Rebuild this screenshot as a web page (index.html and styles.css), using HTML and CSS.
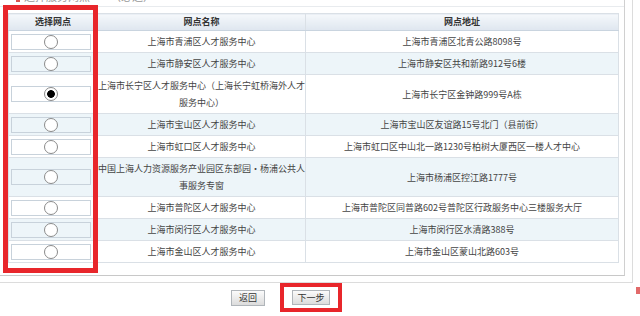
FILE: index.html
```html
<!DOCTYPE html>
<html lang="zh-CN">
<head>
  <meta charset="UTF-8">
  <meta name="viewport" content="width=device-width, initial-scale=1.0">
  <title>选择服务网点</title>
  <link rel="stylesheet" href="styles.css">
</head>
<body>
  <div class="page">
    <div class="frame">
      <div class="panel">
        <div class="panel-title">
          <span class="mark"></span>
          <span class="title-text">选择服务网点</span>
          <span class="title-note">（必选）</span>
        </div>
        <table class="sites">
          <colgroup>
            <col class="col-pick">
            <col class="col-name">
            <col class="col-addr">
          </colgroup>
          <thead>
            <tr>
              <th>选择网点</th>
              <th>网点名称</th>
              <th>网点地址</th>
            </tr>
          </thead>
          <tbody>
            <tr>
              <td><label class="pick"><input type="radio" name="site"></label></td>
              <td>上海市青浦区人才服务中心</td>
              <td>上海市青浦区北青公路8098号</td>
            </tr>
            <tr>
              <td><label class="pick"><input type="radio" name="site"></label></td>
              <td>上海市静安区人才服务中心</td>
              <td>上海市静安区共和新路912号6楼</td>
            </tr>
            <tr>
              <td><label class="pick"><input type="radio" name="site" checked></label></td>
              <td>上海市长宁区人才服务中心（上海长宁虹桥海外人才<br>服务中心）</td>
              <td>上海市长宁区金钟路999号A栋</td>
            </tr>
            <tr>
              <td><label class="pick"><input type="radio" name="site"></label></td>
              <td>上海市宝山区人才服务中心</td>
              <td>上海市宝山区友谊路15号北门（县前街）</td>
            </tr>
            <tr>
              <td><label class="pick"><input type="radio" name="site"></label></td>
              <td>上海市虹口区人才服务中心</td>
              <td>上海市虹口区中山北一路1230号柏树大厦西区一楼人才中心</td>
            </tr>
            <tr>
              <td><label class="pick"><input type="radio" name="site"></label></td>
              <td>中国上海人力资源服务产业园区东部园・杨浦公共人<br>事服务专窗</td>
              <td>上海市杨浦区控江路1777号</td>
            </tr>
            <tr>
              <td><label class="pick"><input type="radio" name="site"></label></td>
              <td>上海市普陀区人才服务中心</td>
              <td>上海市普陀区同普路602号普陀区行政服务中心三楼服务大厅</td>
            </tr>
            <tr>
              <td><label class="pick"><input type="radio" name="site"></label></td>
              <td>上海市闵行区人才服务中心</td>
              <td>上海市闵行区水清路388号</td>
            </tr>
            <tr>
              <td><label class="pick"><input type="radio" name="site"></label></td>
              <td>上海市金山区人才服务中心</td>
              <td>上海市金山区蒙山北路603号</td>
            </tr>
          </tbody>
        </table>
      </div>
    </div>

    <div class="actions">
      <button class="btn btn-back">返回</button>
      <span class="highlight"><button class="btn btn-next">下一步</button></span>
    </div>

    <!-- red annotation around the first column -->
    <div class="col-highlight"></div>
    <span class="corner-icon"></span>
  </div>
</body>
</html>
```

FILE: styles.css
```css
/* General Styles */
body {
  margin: 0;
  background: #fff;
  font-family: "Noto Sans CJK SC", "Noto Sans", sans-serif;
  color: #444;
  overflow: hidden;
}

.page {
  position: relative;
  display: flow-root;
  width: 640px;
  height: 316px;
}

.frame {
  margin-top: -14px;
  width: 626px;
  padding: 0 6px 6px 0;
  border-right: 1px solid #dcdcdc;
  border-bottom: 1px solid #dcdcdc;
}

.panel {
  width: 624px;
  padding-bottom: 12px;
  border-right: 1px solid #d0d0d0;
  border-bottom: 1px solid #c8c8c8;
}

.panel-title {
  height: 20px;
  line-height: 20px;
  font-size: 11px;
  color: #999;
  border-bottom: 1px solid #e8ebee;
  display: flex;
  align-items: center;
}

.mark {
  width: 4px;
  height: 12px;
  margin: 0 4px 0 16px;
  background: #d9534f;
}

.title-note {
  margin-left: 20px;
}

/* Table */
.sites {
  margin: 6px 0 0 8px;
  width: 611px;
  border-collapse: collapse;
  table-layout: fixed;
  font-size: 9px;
}

.col-pick { width: 89px; }
.col-name { width: 208px; }

.sites th,
.sites td {
  border: 1px solid #dae0e6;
  text-align: center;
  padding: 0;
}

.sites th {
  height: 16px;
  line-height: 16px;
  font-weight: bold;
  color: #333;
  background: linear-gradient(#f5f8fb, #dee6ef);
  border-bottom-color: #c9d4df;
}

.sites td {
  padding: 2px 0;
  line-height: 17px;
}

.sites tbody tr:nth-child(even) td {
  background: #edf5f9;
}

.pick {
  display: flex;
  align-items: center;
  justify-content: center;
  width: 78px;
  height: 14px;
  margin-left: 2px;
  border: 1px solid #c8d2db;
}

.pick input {
  appearance: none;
  -webkit-appearance: none;
  width: 14px;
  height: 14px;
  margin: 0;
  border: 1px solid #8a8a8a;
  border-radius: 50%;
  background: #fff;
}

.pick input:checked {
  background: radial-gradient(circle, #000 0, #000 3.5px, #fff 4.2px);
}

/* Buttons */
.actions {
  display: flex;
  align-items: center;
  gap: 15px;
  padding-left: 231px;
}

.btn {
  height: 16px;
  padding: 0;
  font-family: inherit;
  font-size: 9px;
  color: #333;
  border: 1px solid #b0b5ba;
  background: linear-gradient(#fbfbfb, #dcdcdc);
}

.btn-back { width: 34px; }
.btn-next { width: 38px; height: 15px; }

.highlight {
  display: flex;
  padding: 3px 8px;
  border: 4px solid #e8262b;
}

/* Annotation overlays */
.col-highlight {
  position: absolute;
  left: 3px;
  top: 5px;
  width: 95px;
  height: 268px;
  box-sizing: border-box;
  border: 5px solid #e8262b;
}

.corner-icon {
  position: absolute;
  left: 636px;
  top: 287px;
  width: 5px;
  height: 7px;
  background: #e26a6a;
}
```
